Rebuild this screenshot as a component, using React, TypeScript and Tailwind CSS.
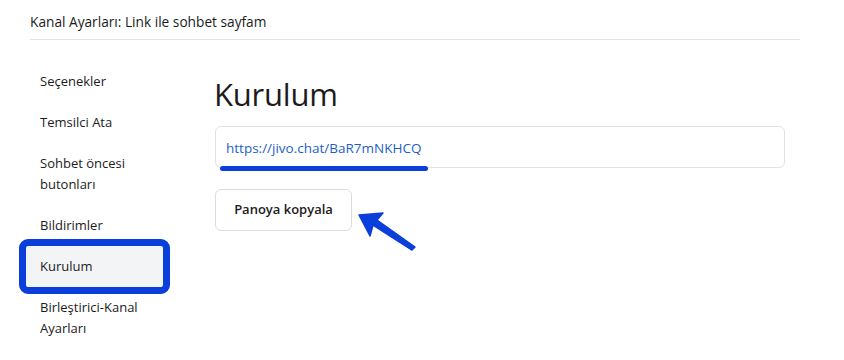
import React from 'react';

const navItems = [
  { label: 'Seçenekler' },
  { label: 'Temsilci Ata' },
  { label: 'Sohbet öncesi butonları' },
  { label: 'Bildirimler' },
  { label: 'Kurulum', active: true },
  { label: 'Birleştirici-Kanal Ayarları' },
];

const App: React.FC = () => {
  return (
    <div
      className="w-[844px] h-[360px] bg-white text-[#1b1b1b] overflow-hidden"
      style={{ fontFamily: '"Open Sans", "Noto Sans", sans-serif' }}
    >
      {/* header */}
      <div className="mx-[30px] w-[770px] pt-[13px] pb-[8px] border-b border-[#e3e3e3]">
        <h1 className="text-[13.7px] leading-[18px] font-medium">Kanal Ayarları: Link ile sohbet sayfam</h1>
      </div>

      <div className="flex">
        {/* sidebar */}
        <nav className="w-[214px] pt-[21px] flex flex-col">
          {navItems.map((item, i) => (
            <div
              key={i}
              className={`ml-[26px] w-[137px] pl-[14px] pr-2 py-[10px] text-[13px] leading-[21px] ${
                item.active ? 'bg-[#f3f4f6] outline-[7px] outline-solid outline-[#0b3fdb] rounded-[2px]' : ''
              }`}
            >
              {item.label}
            </div>
          ))}
        </nav>

        {/* main */}
        <main className="relative flex-1 pt-[34px]">
          <h2 className="text-[31px] leading-[40px] font-medium tracking-[-0.2px]">Kurulum</h2>

          <div className="relative mt-[12px] ml-[1px] w-[570px] h-[42px] border border-[#e2e2e2] rounded-[6px] flex items-center px-[10px]">
            <span className="text-[13.5px] text-[#1d5fc5] pt-[2px]">https://jivo.chat/BaR7mNKHCQ</span>
            <span className="absolute left-[4px] top-[39px] w-[208px] h-[5px] rounded-full bg-[#0b3fdb]" />
          </div>

          <button className="mt-[21px] ml-[1px] w-[137px] h-[42px] border border-[#d9dce1] rounded-[6px] text-[13px] font-semibold bg-white">
            Panoya kopyala
          </button>

          <svg
            className="absolute left-[142px] top-[172px]"
            width="66"
            height="40"
            viewBox="0 0 66 40"
          >
            <path
              d="M3 3 L27 1 L21 8 L59 35 L56 38 L17 13 L14 24 Z"
              fill="#0b3fdb"
              stroke="#0b3fdb"
              strokeWidth="1.5"
              strokeLinejoin="round"
            />
          </svg>
        </main>
      </div>
    </div>
  );
};

export default App;
